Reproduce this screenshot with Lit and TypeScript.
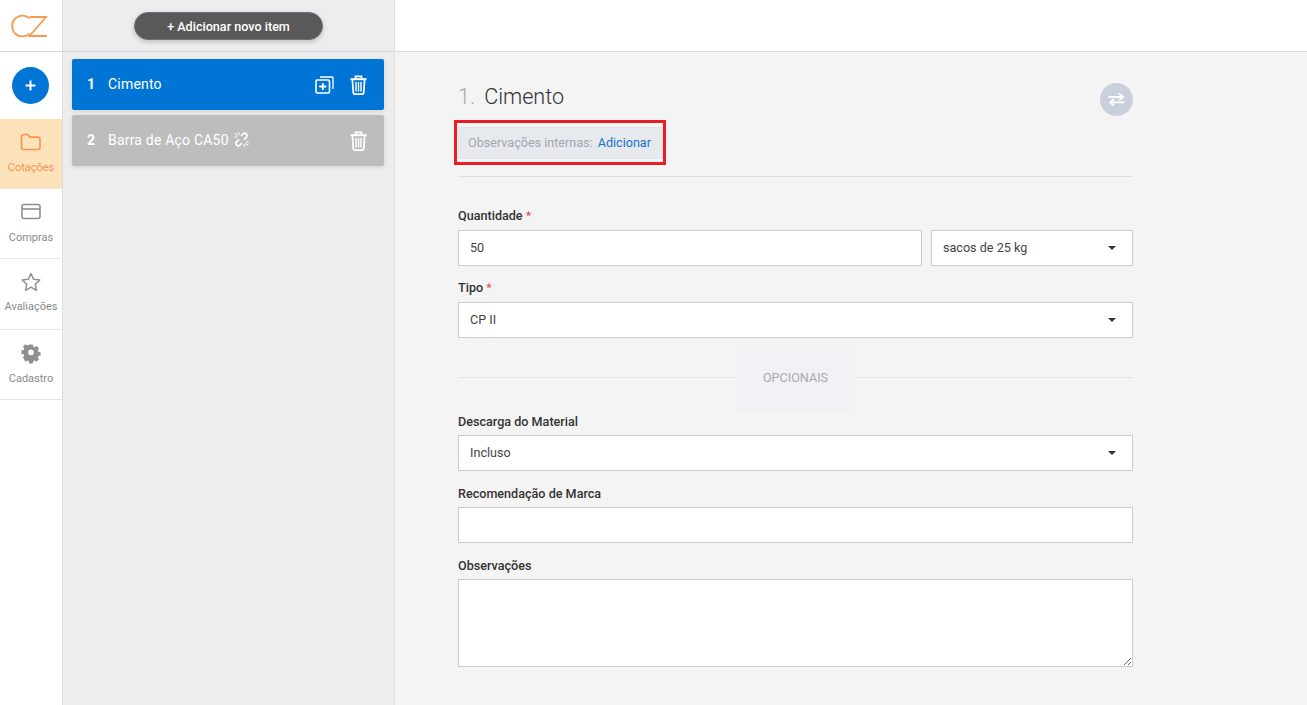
import { LitElement, html, css, svg } from 'lit';
import { customElement } from 'lit/decorators.js';

const navIcons: Record<string, unknown> = {
  folder: svg`<path d="M1.5 6.5a2 2 0 0 1 2-2h4.2l2.3 2.6h8a2 2 0 0 1 2 2v8.4a2 2 0 0 1-2 2H3.5a2 2 0 0 1-2-2z" fill="none" stroke="currentColor" stroke-width="1.6" stroke-linejoin="round"/>`,
  card: svg`<rect x="2" y="3.5" width="18" height="14" rx="2" fill="none" stroke="currentColor" stroke-width="1.6"/><path d="M2 8h18" stroke="currentColor" stroke-width="1.6"/>`,
  star: svg`<path d="M11 2.6l2.6 5.7 6.2.7-4.6 4.2 1.3 6.1-5.5-3.1-5.5 3.1 1.3-6.1L2.2 9l6.2-.7z" fill="none" stroke="currentColor" stroke-width="1.5" stroke-linejoin="round"/>`,
  gear: svg`<path fill="currentColor" fill-rule="evenodd" d="M9.3 2.4h3.4l.5 2.2 1.5.6 1.9-1.2 2.4 2.4-1.2 1.9.6 1.5 2.2.5v3.2l-2.2.5-.6 1.5 1.2 1.9-2.4 2.4-1.9-1.2-1.5.6-.5 2.2H9.3l-.5-2.2-1.5-.6-1.9 1.2L3 15.6l1.2-1.9-.6-1.5-2.2-.5V8.5l2.2-.5.6-1.5L3 4.6 5.4 2.2l1.9 1.2 1.5-.6zM11 7.6a2.8 2.8 0 1 0 0 5.6 2.8 2.8 0 0 0 0-5.6z"/>`,
};

const trash = html`<svg class="ico" width="17" height="20" viewBox="0 0 17 20" fill="none" stroke="#fff" stroke-width="1.7">
  <path d="M0.5 4.2h16" stroke-width="2"/><path d="M5.5 3.6V1.4h6v2.2"/>
  <path d="M2.4 4.5l.9 13.4a1.3 1.3 0 0 0 1.3 1.2h7.8a1.3 1.3 0 0 0 1.3-1.2l.9-13.4"/>
  <path d="M6 7v9.4M8.5 7v9.4M11 7v9.4" stroke-width="1.4"/>
</svg>`;

const duplicate = html`<svg class="ico" width="19" height="18" viewBox="0 0 19 18" fill="none" stroke="#fff">
  <rect x="1" y="4" width="13.5" height="13" rx="1.4" stroke-width="1.6"/>
  <path d="M5 1h12a1 1 0 0 1 1 1v11" stroke-width="1.3"/>
  <path d="M4.3 10.5h7M7.8 7v7" stroke-width="1.8"/>
</svg>`;

const unlink = html`<svg class="unlink" width="15" height="15" viewBox="0 0 15 15" fill="none" stroke="#fff" stroke-width="1.6" stroke-linecap="round">
  <path d="M7.5 3.4l1.6-1.5a2.3 2.3 0 0 1 3.3 3.2l-1.9 2"/>
  <path d="M7.5 11.6l-1.6 1.5a2.3 2.3 0 0 1-3.3-3.2l1.9-2"/>
  <path d="M1 1.6l2 1.6M4.6.6l.5 2M.6 5h2.2M14 13.4l-2-1.6M10.4 14.4l-.5-2M14.4 10h-2.2" stroke-width="1.1"/>
</svg>`;

@customElement('app-root')
export class AppRoot extends LitElement {
  static styles = css`
    :host {
      display: flex;
      height: 705px;
      overflow: hidden;
      font-family: Roboto, 'Liberation Sans', sans-serif;
      color: #333;
      background: #f4f4f4;
    }

    /* left nav */
    .nav {
      width: 62px;
      flex: none;
      background: #fff;
      border-right: 1px solid #dedede;
    }
    .logo {
      height: 51px;
      border-bottom: 1px solid #d6d6da;
      display: flex;
      align-items: center;
      justify-content: center;
    }
    .logo svg {
      margin-right: 2px;
    }
    .add {
      height: 67px;
      display: flex;
      align-items: center;
      justify-content: center;
    }
    .add span {
      width: 37px;
      height: 37px;
      margin-right: 1px;
      border-radius: 50%;
      background: #0075d6;
      display: flex;
      align-items: center;
      justify-content: center;
    }
    .nav-item {
      height: 70px;
      box-sizing: border-box;
      border-bottom: 1px solid #e6e6e6;
      display: flex;
      flex-direction: column;
      align-items: center;
      padding-top: 12px;
      gap: 8px;
      font-size: 11px;
      line-height: 14px;
      color: #8a8a8a;
    }
    .nav-item svg {
      color: #8f8f8f;
      margin-right: 1px;
    }
    .nav-item.active {
      background: #fde3bb;
      color: #f8924b;
      border-bottom-color: #f1e8da;
      padding-top: 11px;
      gap: 9px;
    }
    .nav-item.active svg {
      color: #f8924b;
    }
    .nav-item.tall {
      height: 71px;
      gap: 7px;
    }

    /* item list */
    .list {
      width: 332px;
      flex: none;
      box-sizing: border-box;
      background: #ededed;
      border-right: 1px solid #dfdfe2;
    }
    .list-head {
      height: 39px;
      padding-top: 12px;
      border-bottom: 1px solid #d6d6da;
      display: flex;
      justify-content: center;
    }
    .new-btn {
      width: 189px;
      height: 28px;
      box-sizing: border-box;
      border-radius: 14px;
      background: #595959;
      border: 1px solid #6b7080;
      color: #fff;
      font-size: 12.6px;
      font-weight: 500;
      display: flex;
      align-items: center;
      justify-content: center;
      box-shadow: 0 2px 5px rgba(0, 0, 0, 0.2);
    }
    .items {
      padding: 7px 10px 0 9px;
      display: flex;
      flex-direction: column;
      gap: 5px;
    }
    .item {
      height: 51px;
      box-sizing: border-box;
      padding: 0 17px 2px 15px;
      border-radius: 2px;
      background: #0075d6;
      color: #fff;
      display: flex;
      align-items: center;
      font-size: 14px;
      box-shadow: 0 1px 4px rgba(0, 0, 0, 0.12);
    }
    .item.off {
      background: #bdbdbd;
    }
    .item b {
      font-weight: 700;
      width: 21px;
    }
    .item .name {
      font-weight: 400;
      letter-spacing: 0.2px;
    }
    .item .actions {
      margin-left: auto;
      display: flex;
      align-items: center;
      gap: 16px;
      padding-top: 2px;
    }
    .unlink {
      margin-left: 5px;
    }

    /* main column */
    .main {
      flex: 1;
      min-width: 0;
    }
    .top {
      height: 51px;
      background: #fff;
      border-bottom: 1px solid #d6d6da;
    }
    .form {
      width: 675px;
      margin-left: 63px;
      padding-top: 31px;
    }
    .title-row {
      display: flex;
      align-items: flex-start;
      justify-content: space-between;
      height: 33px;
    }
    .title {
      font-size: 21.6px;
      line-height: 28px;
      font-weight: 300;
      color: #333;
    }
    .title span {
      color: #aaa;
      margin-right: 9px;
    }
    .switch {
      width: 33px;
      height: 33px;
      border-radius: 50%;
      background: #c9cfdb;
      display: flex;
      align-items: center;
      justify-content: center;
    }
    .mark-wrap {
      height: 53px;
    }
    .mark {
      display: inline-block;
      margin: 4px 0 0 -4px;
      border: 3px solid #ed1c24;
      padding: 4px 0 3px 1px;
    }
    .notes {
      width: 205px;
      height: 32px;
      box-sizing: border-box;
      display: flex;
      align-items: center;
      gap: 5px;
      padding: 0 0 2px 9px;
      background: #e6e9ee;
      border: 1px solid #dfe2e7;
      border-radius: 3px;
      font-size: 12.6px;
      color: #a3a7ae;
    }
    .notes a {
      color: #1a73c9;
    }
    .rule {
      height: 1px;
      background: #e0e0e0;
      margin-top: 7px;
    }
    label {
      display: block;
      font-size: 12.6px;
      font-weight: 500;
      line-height: 16px;
      margin-bottom: 6px;
      color: #333;
    }
    label i {
      color: #d9534f;
      font-style: normal;
      font-weight: 400;
    }
    .field {
      margin-bottom: 14px;
    }
    .field.low label {
      padding-top: 1px;
      margin-bottom: 5px;
    }
    .first {
      margin-top: 31px;
    }
    .pair {
      display: flex;
      gap: 9px;
    }
    .control {
      height: 36px;
      box-sizing: border-box;
      width: 100%;
      border: 1px solid #ccc;
      background: #fff;
      padding: 0 11px 2px;
      font: 400 12.6px Roboto, 'Liberation Sans', sans-serif;
      color: #444;
      display: flex;
      align-items: center;
      justify-content: space-between;
      outline: none;
      border-radius: 0;
    }
    .pair .control:first-child {
      flex: 1;
    }
    .pair .unit {
      width: 202px;
      flex: none;
    }
    .caret {
      width: 0;
      height: 0;
      border-left: 4px solid transparent;
      border-right: 4px solid transparent;
      border-top: 4px solid #333;
      margin: 2px 5px 0 0;
    }
    textarea.control {
      display: block;
      height: 88px;
      padding: 8px 11px;
      resize: vertical;
    }
    .divider {
      display: flex;
      align-items: flex-start;
      margin-top: -2px;
    }
    .divider::before,
    .divider::after {
      content: '';
      flex: 1;
      height: 1px;
      margin-top: 27px;
      background: #e2e2e2;
    }
    .divider span {
      width: 119px;
      height: 63px;
      box-sizing: border-box;
      padding-top: 20px;
      text-align: center;
      background: #f0f2f6;
      color: #aaa;
      font-size: 12.6px;
      line-height: 16px;
    }
  `;

  private navItem(icon: string, label: string, cls = '') {
    return html`<div class="nav-item ${cls}">
      <svg width="22" height="22" viewBox="0 0 22 22">${navIcons[icon]}</svg>
      <span>${label}</span>
    </div>`;
  }

  render() {
    return html`
      <nav class="nav">
        <div class="logo">
          <svg width="38" height="24" viewBox="0 0 38 24" fill="none" stroke="#f79a4f" stroke-width="1.8">
            <path d="M18.6 4.4A10.4 10.4 0 1 0 18.6 19.6"/>
            <path d="M18.5 3H35L18.5 22H36"/>
          </svg>
        </div>
        <div class="add">
          <span>
            <svg width="11" height="11" viewBox="0 0 11 11"><path d="M5.5 0.5v10M0.5 5.5h10" stroke="#fff" stroke-width="2"/></svg>
          </span>
        </div>
        ${this.navItem('folder', 'Cotações', 'active')}
        ${this.navItem('card', 'Compras')}
        ${this.navItem('star', 'Avaliações', 'tall')}
        ${this.navItem('gear', 'Cadastro')}
      </nav>

      <section class="list">
        <div class="list-head"><div class="new-btn">+ Adicionar novo item</div></div>
        <div class="items">
          <div class="item">
            <b>1</b><span class="name">Cimento</span>
            <div class="actions">${duplicate}${trash}</div>
          </div>
          <div class="item off">
            <b>2</b><span class="name">Barra de Aço CA50</span>${unlink}
            <div class="actions">${trash}</div>
          </div>
        </div>
      </section>

      <section class="main">
        <div class="top"></div>
        <div class="form">
          <div class="title-row">
            <div class="title"><span>1.</span>Cimento</div>
            <div class="switch">
              <svg width="17" height="13" viewBox="0 0 17 13" fill="none" stroke="#fff" stroke-width="1.8">
                <path d="M0.5 4h14M11 0.6l4 3.4-4 3.4" stroke-linejoin="round"/>
                <path d="M16.5 9.4h-14M6 6l-4 3.4 4 3.4" stroke-linejoin="round"/>
              </svg>
            </div>
          </div>
          <div class="mark-wrap">
            <div class="mark">
              <div class="notes"><span>Observações internas:</span><a>Adicionar</a></div>
            </div>
          </div>
          <div class="rule"></div>

          <div class="field first">
            <label>Quantidade <i>*</i></label>
            <div class="pair">
              <input class="control" .value=${'50'} />
              <div class="control unit">sacos de 25 kg<span class="caret"></span></div>
            </div>
          </div>
          <div class="field">
            <label>Tipo <i>*</i></label>
            <div class="control">CP II<span class="caret"></span></div>
          </div>
          <div class="divider"><span>OPCIONAIS</span></div>
          <div class="field low">
            <label>Descarga do Material</label>
            <div class="control">Incluso<span class="caret"></span></div>
          </div>
          <div class="field low">
            <label>Recomendação de Marca</label>
            <input class="control" />
          </div>
          <div class="field low">
            <label>Observações</label>
            <textarea class="control"></textarea>
          </div>
        </div>
      </section>
    `;
  }
}
